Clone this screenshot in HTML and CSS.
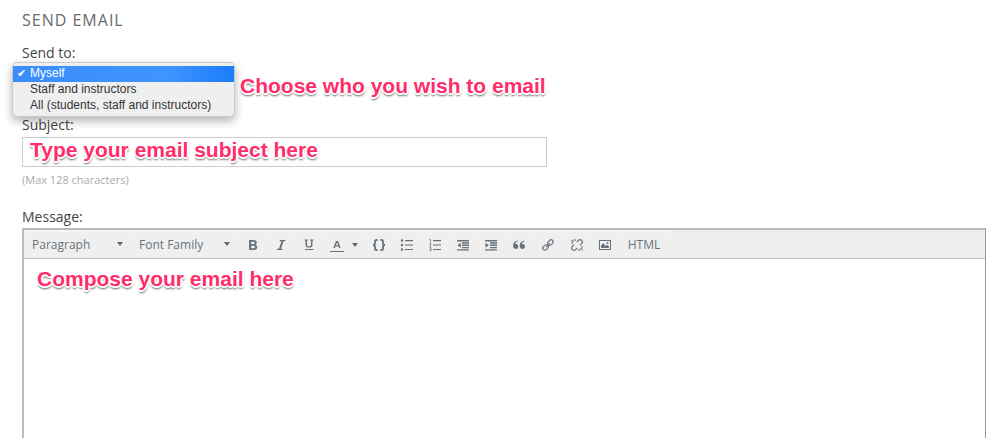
FILE: index.html
```html
<!DOCTYPE html>
<html lang="en">
<head>
<meta charset="utf-8">
<meta name="viewport" content="width=device-width, initial-scale=1">
<title>Send Email</title>
<link rel="stylesheet" href="styles.css">
</head>
<body>
<form class="email-form">
  <h1 class="title">Send Email</h1>

  <div class="field send-to">
    <label class="label" for="send-to">Send to:</label>
    <select class="recipient-menu" id="send-to" size="3">
      <option class="recipient" selected>Myself</option>
      <option class="recipient">Staff and instructors</option>
      <option class="recipient">All (students, staff and instructors)</option>
    </select>
    <span class="note note-recipient">Choose who you wish to email</span>
  </div>

  <div class="field subject">
    <label class="label" for="subject">Subject:</label>
    <div class="subject-box">
      <input class="subject-input" id="subject" type="text" maxlength="128">
      <span class="note note-subject">Type your email subject here</span>
    </div>
    <p class="hint">(Max 128 characters)</p>
  </div>

  <label class="label" for="message">Message:</label>
  <div class="editor">
    <div class="toolbar">
      <span class="drop">
        <select class="drop-select" aria-label="Block format"><option>Paragraph</option></select>
      </span>
      <span class="drop">
        <select class="drop-select" aria-label="Font family"><option>Font Family</option></select>
      </span>
      <button class="tool" type="button" aria-label="Bold"><svg class="icon" viewBox="0 0 14 14"><path fill-rule="evenodd" d="M3 2h4.500c2.200 0 3.300 1 3.300 2.600 0 1.100-.6 1.900-1.500 2.200 1.200.3 1.900 1.200 1.900 2.500C11.200 11 10 12 7.700 12H3zm2.200 1.700v2.400h1.900c1 0 1.500-.4 1.500-1.200s-.5-1.200-1.500-1.200zm0 4v2.600h2.200c1.100 0 1.600-.4 1.600-1.300s-.6-1.300-1.700-1.300z"/></svg></button>
      <button class="tool" type="button" aria-label="Italic"><svg class="icon" viewBox="0 0 14 14"><path d="M6 2h5.500l-.3 1.200H9.500L7 10.800h1.600L8.300 12H3l.3-1.200H5L7.500 3.200H5.700z"/></svg></button>
      <button class="tool" type="button" aria-label="Underline"><svg class="icon" viewBox="0 0 14 14"><path d="M2.500 1.500H6v1H5v4c0 1.300.7 2 2 2s2-.7 2-2v-4H8v-1h3.500v1h-1v4.200c0 1.900-1.300 2.900-3.500 2.900s-3.500-1-3.500-2.900V2.500h-1zM3 11h8.500v1H3z"/></svg></button>
      <button class="tool split" type="button" aria-label="Text color"><svg class="icon" viewBox="0 0 14 14"><path fill-rule="evenodd" d="M6 3h2l2.700 7H9.200l-.6-1.600H5.400L4.800 10H3.300zm1 1.500L5.800 7.300h2.400zM0 13h14v1H0z"/></svg><i class="caret"></i></button>
      <button class="tool" type="button" aria-label="Code block"><svg class="icon" viewBox="0 0 14 14"><path class="line bold" d="M5.500 2h-1q-1.500 0-1.500 1.300v2Q3 7 1 7q2 0 2 1.700v2Q3 12 4.500 12h1M8.500 2h1q1.500 0 1.500 1.300v2Q11 7 13 7q-2 0-2 1.700v2q0 1.300-1.500 1.300h-1"/></svg></button>
      <button class="tool" type="button" aria-label="Bullet list"><svg class="icon" viewBox="0 0 14 14"><circle cx="2" cy="2.500" r="1.200"/><circle cx="2" cy="7" r="1.200"/><circle cx="2" cy="11.500" r="1.200"/><path d="M5 2h8v1.200H5zM5 6.400h8v1.200H5zM5 10.900h8v1.200H5z"/></svg></button>
      <button class="tool" type="button" aria-label="Numbered list"><svg class="icon" viewBox="0 0 14 14"><path d="M5 2h8v1.200H5zM5 6.400h8v1.200H5zM5 10.900h8v1.200H5z"/><path class="line thin" d="M1.500 1.500h1v3M1.500 5.800h1.500v1.100l-1.400 1.400H3M1.500 9.700H3v3H1.500M2 11.200h1"/></svg></button>
      <button class="tool" type="button" aria-label="Decrease indent"><svg class="icon" viewBox="0 0 14 14"><path d="M1 2h12v1.400H1zM6 4.300h7v1.400H6zM6 6.600h7V8H6zM6 8.900h7v1.400H6zM1 11.200h12v1.300H1zM4.800 4.700v5L1.500 7.200z"/></svg></button>
      <button class="tool" type="button" aria-label="Increase indent"><svg class="icon" viewBox="0 0 14 14"><path d="M1 2h12v1.400H1zM6 4.300h7v1.400H6zM6 6.600h7V8H6zM6 8.900h7v1.400H6zM1 11.200h12v1.300H1zM1.500 4.700v5l3.300-2.500z"/></svg></button>
      <button class="tool" type="button" aria-label="Blockquote"><svg class="icon" viewBox="0 0 14 14"><path d="M6 3.300C4.400 3.800 3.600 4.600 3.300 6 5 5.600 6.400 6.700 6.400 8.300c0 1.500-1.100 2.700-2.600 2.700-1.700 0-2.700-1.300-2.700-3.200C1.100 5 2.800 3.200 6 2.600zM12.600 3.300c-1.600.5-2.400 1.300-2.700 2.700 1.700-.4 3.100.7 3.100 2.300 0 1.500-1.100 2.700-2.600 2.700-1.700 0-2.700-1.300-2.700-3.200 0-2.800 1.700-4.600 4.900-5.200z"/></svg></button>
      <button class="tool wide" type="button" aria-label="Insert link"><svg class="icon" viewBox="0 0 14 14"><g transform="rotate(-45 7 7)"><rect class="line" x="0.500" y="4.900" width="6" height="4.200" rx="2.100"/><rect class="line" x="7.500" y="4.900" width="6" height="4.200" rx="2.100"/><path class="line" d="M4.500 7h5"/></g></svg></button>
      <button class="tool" type="button" aria-label="Remove link"><svg class="icon" viewBox="0 0 14 14"><g transform="rotate(-45 7 7)"><path class="line" d="M5.200 4.700H2.800a2.300 2.300 0 0 0 0 4.600h2.400M8.800 4.700h2.400a2.300 2.300 0 0 1 0 4.600H8.800"/></g><path class="line" d="M1.500 2l2 1.700M4.800 1l.4 2M1 5h2M12.500 12l-2-1.700M9.200 13l-.4-2M13 9h-2"/></svg></button>
      <button class="tool" type="button" aria-label="Insert image"><svg class="icon" viewBox="0 0 14 14"><path fill-rule="evenodd" d="M1 2h12v10H1zm1 1v8h10V3z"/><path d="M3 10V7.500L5.200 5l2.300 3 1.600-1.300L11 8.500V10z"/><circle cx="9.500" cy="5" r="1"/></svg></button>
      <button class="tool text" type="button">HTML</button>
    </div>
    <div class="compose">
      <textarea class="message" id="message"></textarea>
      <span class="note note-message">Compose your email here</span>
    </div>
  </div>
</form>
</body>
</html>
```
FILE: styles.css
```css
* {
  box-sizing: border-box;
}

body {
  margin: 0;
  background: #fff;
  color: #444;
  font: 14px/20px "Open Sans", sans-serif;
}

.email-form {
  display: flex;
  flex-direction: column;
  min-height: 100vh;
  padding: 8px 14px 0 22px;
}

.title {
  margin: 0 0 11px;
  color: #6a6a6a;
  font-size: 16px;
  font-weight: 400;
  line-height: 24px;
  letter-spacing: 1px;
  text-transform: uppercase;
}

.field {
  position: relative;
}

.label {
  display: block;
}

.send-to {
  height: 72px;
}

.recipient-menu {
  position: absolute;
  z-index: 2;
  top: 19px;
  left: -10px;
  width: 223px;
  height: 55px;
  padding: 3px 0;
  overflow: hidden;
  border: 1px solid #c8cbcb;
  border-radius: 5px;
  outline: none;
  background: #efefef;
  box-shadow: 0 4px 10px rgba(0, 0, 0, 0.3);
  color: #333;
  font: 12px/16px "Liberation Sans", Arial, sans-serif;
}

.recipient {
  height: 16px;
  min-height: 16px;
  padding: 0 0 0 17px;
  line-height: 16px;
}

.recipient:checked {
  padding-left: 4px;
  background: linear-gradient(90deg, #3a8dfb, #3f94ff 70%, #1a7dfb);
  color: #fff;
  -webkit-text-fill-color: #fff;
}

.recipient:checked::before {
  display: inline-block;
  width: 13px;
  content: "✔";
  font: 11px/14px "DejaVu Sans", sans-serif;
}

.note {
  position: absolute;
  color: #ff2d6b;
  font: bold 21px/24px "Liberation Sans", Arial, sans-serif;
  white-space: nowrap;
  pointer-events: none;
  text-shadow: -2px 0 #fff, 2px 0 #fff, 0 -2px #fff, 0 2px #fff,
    -1px -1px #fff, 1px -1px #fff, -1px 1px #fff, 1px 1px #fff,
    0 3px 2px rgba(0, 0, 0, 0.5), 1px 2px 3px rgba(0, 0, 0, 0.3);
}

.note-recipient {
  top: 31px;
  left: 218px;
}

.subject-box {
  position: relative;
  width: 54.5%;
  margin-top: 2px;
}

.subject-input {
  display: block;
  width: 100%;
  height: 30px;
  padding: 4px 8px;
  border: 1px solid #ccc;
  background: #fff;
  font: inherit;
}

.note-subject {
  top: 1px;
  left: 8px;
}

.hint {
  margin: 3px 0 17px;
  color: #aaa;
  font-size: 11px;
  line-height: 20px;
}

.editor {
  display: flex;
  flex: 1;
  flex-direction: column;
  min-height: 210px;
  margin-top: 1px;
  border: solid #bbb;
  border-width: 2px 1px 0 2px;
  border-right-color: #999;
}

.toolbar {
  display: flex;
  flex-wrap: wrap;
  align-items: center;
  padding: 1px;
  border-bottom: 1px solid #c4c4c4;
  background: #efefef;
}

.drop {
  position: relative;
  width: 107px;
}

.drop-select {
  display: block;
  width: 100%;
  height: 26px;
  padding: 0 24px 0 7px;
  appearance: none;
  border: 0;
  border-top: 1px solid #f8f8f8;
  border-radius: 3px;
  background: none;
  color: #6a747c;
  font: 12px/24px "Open Sans", sans-serif;
}

.drop::after,
.caret {
  border: 3px solid transparent;
  border-top: 4px solid #5f6972;
  border-bottom: 0;
  content: "";
}

.drop::after {
  position: absolute;
  top: 11px;
  right: 9px;
  pointer-events: none;
}

.tool {
  display: flex;
  align-items: center;
  justify-content: center;
  width: 28px;
  height: 26px;
  padding: 0;
  border: 0;
  border-top: 1px solid #f8f8f8;
  border-radius: 3px;
  background: none;
  color: #68727a;
}

.split {
  gap: 8px;
  width: 42px;
}

.wide {
  width: 30px;
}

.text {
  width: 50px;
  color: #6a747c;
  font: 12px/24px "Open Sans", sans-serif;
}

.icon {
  width: 14px;
  height: 14px;
  fill: currentColor;
}

.line {
  fill: none;
  stroke: currentColor;
  stroke-width: 1.2;
}

.bold {
  stroke-width: 1.8;
}

.thin {
  stroke-width: 0.8;
}

.compose {
  position: relative;
  display: flex;
  flex: 1;
}

.message {
  flex: 1;
  padding: 8px 12px;
  border: 0;
  outline: none;
  background: #fff;
  font: inherit;
  resize: none;
}

.note-message {
  top: 8px;
  left: 13px;
}
```
